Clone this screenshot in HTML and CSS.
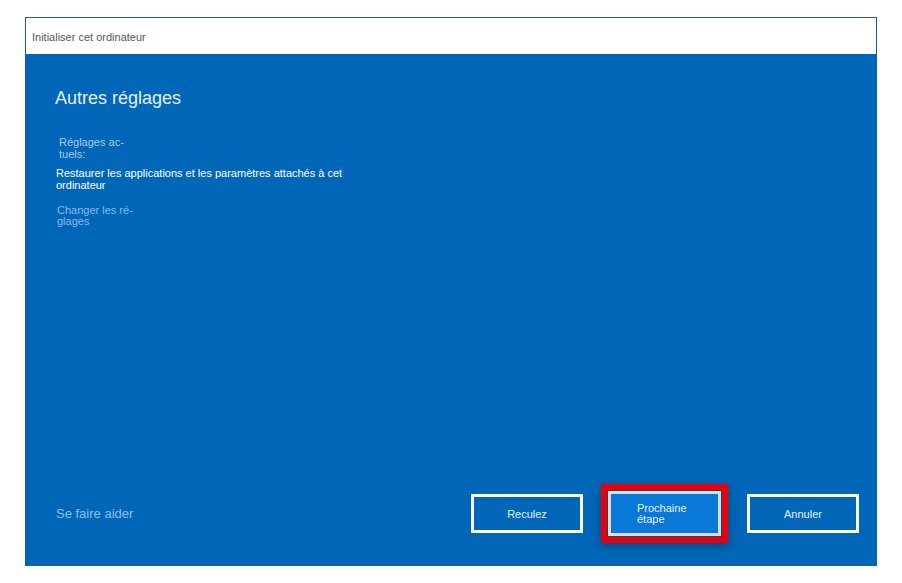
FILE: index.html
```html
<!DOCTYPE html>
<html lang="fr">

<head>
    <meta charset="UTF-8">
    <title>Initialiser cet ordinateur</title>
    <link rel="stylesheet" href="styles.css">
</head>

<body>
    <div class="window">
        <div class="titlebar">Initialiser cet ordinateur</div>
        <main class="content">
            <h1>Autres réglages</h1>
            <div class="label">Réglages ac-<br>tuels:</div>
            <div class="current">Restaurer les applications et les paramètres attachés à cet<br>ordinateur</div>
            <a class="change" href="#">Changer les ré-<br>glages</a>
            <div class="spacer"></div>
            <div class="footer">
                <a class="help" href="#">Se faire aider</a>
                <div class="buttons">
                    <button class="btn">Reculez</button>
                    <button class="btn primary">Prochaine<br>étape</button>
                    <button class="btn">Annuler</button>
                </div>
            </div>
        </main>
    </div>
</body>

</html>
```

FILE: styles.css
```css
body {
    margin: 0;
    background: #ffffff;
    font-family: "Liberation Sans", Arial, sans-serif;
}

.window {
    margin: 17px 0 0 25px;
    width: 852px;
    height: 549px;
    display: flex;
    flex-direction: column;
}

.titlebar {
    height: 36px;
    border: 1px solid #1d5f8c;
    border-bottom: 0;
    background: #fff;
    color: #555;
    font-size: 11px;
    line-height: 38px;
    padding-left: 6px;
}

.content {
    flex: 1;
    background: #0067b8;
    padding: 33px 18px 30px 30px;
    display: flex;
    flex-direction: column;
}

h1 {
    margin: 0 0 27px 0;
    font-weight: normal;
    font-size: 18px;
    line-height: 22px;
    color: #e4f0fb;
}

.label {
    margin-left: 4px;
    font-size: 11px;
    line-height: 12px;
    color: #a8c8e8;
}

.current {
    margin-top: 7px;
    margin-left: 1px;
    font-size: 11px;
    line-height: 12px;
    color: #ffffff;
}

.change {
    margin-top: 14px;
    margin-left: 2px;
    font-size: 11px;
    line-height: 11px;
    color: #8ab9ea;
    text-decoration: none;
}

.spacer {
    flex: 1;
}

.footer {
    display: flex;
    align-items: center;
    justify-content: space-between;
}

.help {
    margin-left: 1px;
    font-size: 13px;
    color: #8dbef0;
    text-decoration: none;
}

.buttons {
    display: flex;
    align-items: center;
    gap: 25px;
}

.btn {
    width: 112px;
    height: 39px;
    border: 3px solid #ffffff;
    background: #0067b8;
    color: #e4f0fb;
    font-family: "Liberation Sans", Arial, sans-serif;
    font-size: 11px;
    padding: 0;
}

.btn.primary {
    width: 113px;
    height: 45px;
    margin-right: 1px;
    border-color: #d8dde2;
    background: #0a78d8;
    text-align: left;
    padding-left: 26px;
    line-height: 11px;
    box-shadow: 0 0 0 1px #1a4670, 0 0 0 7px #e8000b, 0 3px 10px 7px rgba(0, 30, 70, 0.45);
}
```
